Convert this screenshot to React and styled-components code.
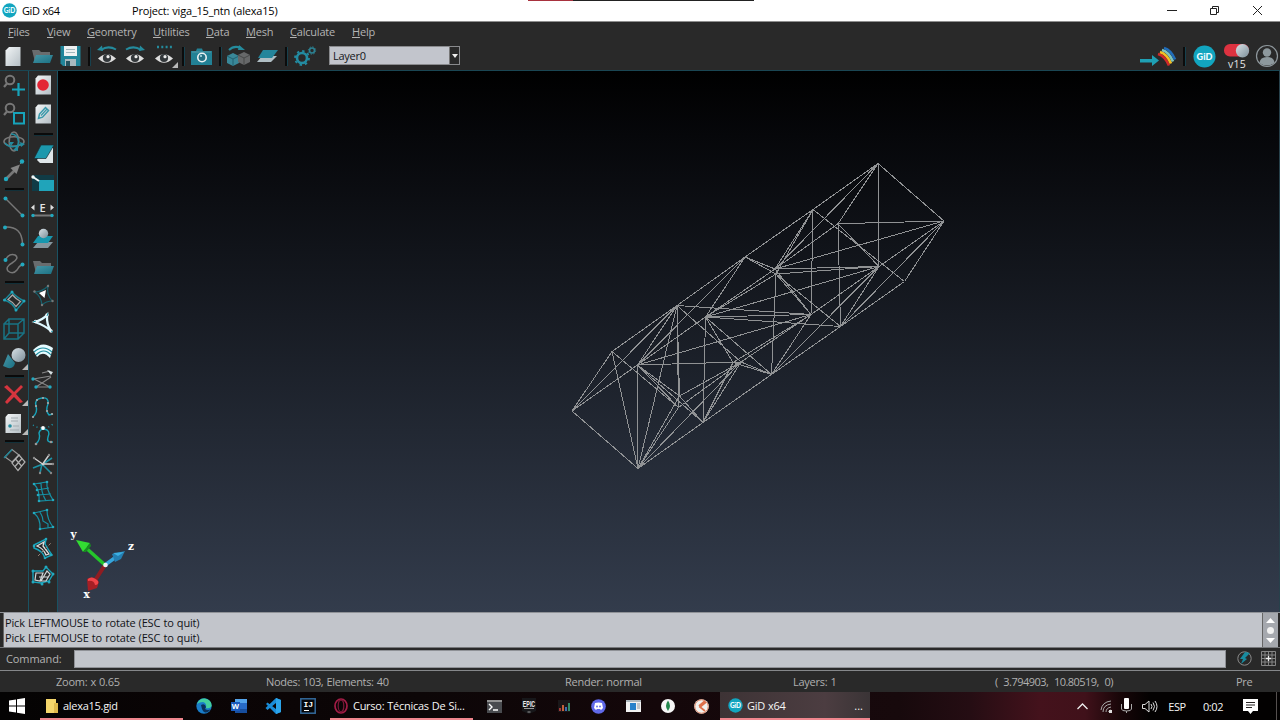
import React from "react";
import styled, { createGlobalStyle } from "styled-components";

const GlobalStyle = createGlobalStyle`
  * { box-sizing: border-box; }
  html, body { margin: 0; padding: 0; background: #292929; }
  body { font-family: "Open Sans", "Noto Sans", sans-serif; font-size: 11px; word-spacing: 0.5px; overflow: hidden; }
  svg { display: block; flex: none; }
`;

const TEAL = "#17a3ba";

const Window = styled.div`
  width: 1280px;
  height: 720px;
  display: flex;
  flex-direction: column;
  background: #292929;
  overflow: hidden;
`;

/* ---------- title bar ---------- */
const TitleBar = styled.header`
  height: 22px;
  flex: none;
  display: flex;
  align-items: center;
  background: #fff;
  color: #000;
  border-bottom: 1px solid #8e8e8e;
  padding-left: 2px;
`;
const AppName = styled.span`
  width: 110px;
  padding-left: 5px;
  line-height: 20px;
  letter-spacing: -0.4px;
`;
const ProjectName = styled.span`
  width: 401px;
  padding-left: 5px;
  line-height: 20px;
  letter-spacing: -0.2px;
`;
const CaptureMark = styled.span`
  align-self: flex-start;
  display: flex;
  width: 226px;
  height: 1px;
  background: #222;
  &::before { content: ""; width: 45px; height: 1px; background: #a8323e; }
`;
const WindowButtons = styled.div`
  margin-left: auto;
  padding-right: 1px;
  display: flex;
  align-items: center;
`;
const WindowButton = styled.span`
  width: 43px;
  display: flex;
  justify-content: center;
`;

/* ---------- menu ---------- */
const MenuBar = styled.nav`
  height: 20px;
  flex: none;
  display: flex;
  align-items: center;
  padding-left: 8px;
  color: #b4b4b4;
`;
const MenuItem = styled.span`
  display: block;
  width: ${(p) => p.$w}px;
  line-height: 20px;
  letter-spacing: -0.2px;
  white-space: nowrap;
  &::first-letter { text-decoration: underline; text-underline-offset: 1px; }
`;

/* ---------- toolbars ---------- */
const ToolBar = styled.div`
  height: 29px;
  flex: none;
  display: flex;
  align-items: center;
  border-bottom: 1px solid #1a4653;
`;
const ToolSlot = styled.div`
  width: ${(p) => p.$w || 28}px;
  height: ${(p) => p.$h || 28}px;
  flex: none;
  display: flex;
  align-items: center;
  justify-content: center;
`;
const BarDivider = styled.div`
  width: 9px;
  flex: none;
  display: flex;
  justify-content: center;
  &::before { content: ""; width: 2px; height: 19px; margin-left: 1px; background: #0c0c0c; border-right: 1px solid #17414e; }
`;
const LayerSelect = styled.div`
  width: 131px;
  height: 19px;
  margin-left: 10px;
  margin-bottom: 1px;
  display: flex;
  border: 1px solid #898a8d;
  background: #c2c5cc;
  color: #15171b;
  line-height: 17px;
  padding-left: 3px;
  letter-spacing: -0.25px;
`;
const SelectArrow = styled.span`
  margin-left: auto;
  width: 10px;
  height: 17px;
  border-left: 1px solid #777;
  background: #292929;
  display: flex;
  align-items: center;
  justify-content: center;
`;
const ToolRight = styled.div`
  margin-left: auto;
  display: flex;
  align-items: center;
`;
const VersionToggle = styled.div`
  width: 32px;
  height: 28px;
  display: flex;
  flex-direction: column;
  align-items: center;
  padding-top: 2px;
`;
const VersionText = styled.span`
  color: #e6e6e6;
  font-size: 10.5px;
  line-height: 12px;
  letter-spacing: 0.2px;
`;

const Workspace = styled.main`
  height: 541px;
  flex: none;
  display: flex;
`;
const SideBar = styled.aside`
  width: 29px;
  flex: none;
  display: flex;
  flex-direction: column;
  border-right: 1px solid #1a5262;
`;
const SideDivider = styled.div`
  height: ${(p) => p.$h || 8}px;
  flex: none;
  display: flex;
  align-items: center;
  justify-content: center;
  &::before { content: ""; width: 19px; height: 2px; background: #0a0a0a; border-bottom: 1px solid #123039; }
`;
const Viewport = styled.section`
  flex: 1;
  border-right: 1px solid #27414b;
  background: linear-gradient(#000 0%, #06070a 12%, #333c4c 100%);
`;

/* ---------- console ---------- */
const MessagePanel = styled.div`
  height: 36px;
  flex: none;
  display: flex;
  padding-left: 3px;
  padding-right: 2px;
  border-top: 1px solid #8f9297;
  border-bottom: 1px solid #77797c;
`;
const MessageText = styled.div`
  flex: 1;
  background: #c2c5cb;
  border-left: 1px solid #666;
  border-right: 1px solid #666;
  color: #111318;
  padding: 2px 0 0 1px;
  line-height: 15px;
  letter-spacing: -0.17px;
  white-space: pre;
`;
const ScrollBar = styled.div`
  width: 15px;
  background: #a5a8ae;
  display: flex;
  align-items: center;
  justify-content: center;
`;
const CommandRow = styled.div`
  height: 22px;
  flex: none;
  display: flex;
  align-items: center;
  padding: 0 0 1px 6px;
  color: #b4b4b4;
`;
const CommandLabel = styled.span`
  width: 68px;
  letter-spacing: -0.1px;
`;
const CommandInput = styled.div`
  width: 1152px;
  height: 18px;
  background: #c2c5cb;
  border: 1px solid #8f9196;
`;
const CommandIcons = styled.div`
  display: flex;
  align-items: center;
  gap: 9px;
  padding-left: 11px;
`;
const StatusBar = styled.footer`
  height: 22px;
  flex: none;
  border-top: 1px solid #85878a;
  padding: 0 0 1px 56px;
  display: flex;
  align-items: center;
  color: #b0b0b0;
`;
const StatusItem = styled.span`
  width: ${(p) => p.$w}px;
  white-space: pre;
  letter-spacing: ${(p) => p.$track || -0.25}px;
`;

/* ---------- taskbar ---------- */
const TaskBar = styled.div`
  height: 28px;
  flex: none;
  display: flex;
  color: #f5f5f5;
  background: linear-gradient(90deg, #040303 0, #0a0405 180px, #0c0607 420px, #14070a 660px, #17090c 900px, #250d13 970px, #44121c 1040px, #40111a 1085px, #180608 1120px, #030101 1150px, #030101 100%);
`;
const TaskItem = styled.div`
  width: ${(p) => p.$w}px;
  flex: none;
  display: flex;
  align-items: center;
  margin-left: ${(p) => p.$before || 0}px;
  padding: 1px 7px 0 ${(p) => p.$pad || 5}px;
  gap: ${(p) => p.$gap || 5}px;
  border-bottom: 2px solid #f0868e;
  background: ${(p) => (p.$active ? "linear-gradient(90deg, #3d3335, #4c3d41 70%, #3a3436)" : "transparent")};
  letter-spacing: -0.28px;
  white-space: nowrap;
`;
const TaskMore = styled.span`
  margin-left: auto;
  letter-spacing: 0;
`;
const TaskIcon = styled.div`
  width: ${(p) => p.$w || 34.7}px;
  padding-right: ${(p) => p.$right || 0}px;
  flex: none;
  display: flex;
  align-items: center;
  justify-content: center;
`;
const Tray = styled.div`
  margin-left: auto;
  display: flex;
  align-items: center;
`;
const TrayCell = styled.span`
  width: ${(p) => p.$w}px;
  padding-right: ${(p) => p.$right || 0}px;
  display: flex;
  justify-content: center;
  letter-spacing: -0.4px;
`;
const DesktopEdge = styled.span`
  width: 4px;
  height: 28px;
  border-left: 1px solid #55504f;
`;

/* Icon drawn on a 28-unit grid. */
const Icon = ({ size = 28, children }) => (
  <svg width={size} height={size} viewBox="0 0 28 28" fill="none">
    {children}
  </svg>
);

const Dots = ({ at, fill = "#22a9bf", r = 1.7 }) =>
  at.map(([x, y], i) => <circle key={i} cx={x} cy={y} r={r} fill={fill} />);

const GidBadge = ({ d, font }) => (
  <svg width={d} height={d} viewBox="0 0 24 24">
    <circle cx="12" cy="12" r="11.5" fill="#12a5bf" />
    <text x="12" y="15.8" textAnchor="middle" fontFamily="Lato, sans-serif" fontWeight="900" fontSize={font || 10.5} fill="#eefcff">GiD</text>
  </svg>
);

const Eye = ({ children }) => (
  <Icon>
    <path d="M5 16.500Q14 8 23 16.500Q14 25 5 16.500Z" fill="#dedede" />
    <circle cx="14" cy="16" r="4.100" fill="#33383b" />
    <circle cx="15" cy="14.700" r="1.600" fill="#ececec" />
    {children}
  </Icon>
);

const Corner = () => <path d="M28 20V26H22Z" fill="#b9b9b9" />;

const FolderShape = () => (
  <>
    <path d="M4 8H11L13 10H22V20H7Z" fill="#696c6e" />
    <path d="M8 13H25L22 21H5Z" fill="url(#tealFade)" />
  </>
);

const Gradients = styled.svg`
  position: absolute;
  width: 0;
  height: 0;
`;

const Defs = () => (
  <defs>
    <linearGradient id="tealFade" x1="0" y1="0" x2="1" y2="1">
      <stop offset="0" stopColor="#4896a7" />
      <stop offset="1" stopColor="#1a7183" />
    </linearGradient>
    <linearGradient id="paper" x1="0" y1="0" x2="1" y2="1">
      <stop offset="0" stopColor="#f2f5f6" />
      <stop offset="1" stopColor="#b5bfc5" />
    </linearGradient>
    <linearGradient id="ball" x1="0" y1="0" x2="1" y2="1">
      <stop offset="0" stopColor="#d9e2e7" />
      <stop offset="1" stopColor="#7b8e99" />
    </linearGradient>
  </defs>
);

const Page = ({ children }) => (
  <Icon>
    <path d="M9 4.500H22V23.500H6.500V7.500Z" fill="url(#paper)" />
    {children}
  </Icon>
);

const leftTools = [
  [
    <Icon><circle cx="10" cy="9" r="4.300" stroke="#777" strokeWidth="2" /><path d="M7 12.500L4 16" stroke="#777" strokeWidth="2.200" /><path d="M18.500 12V25M12 18.500H25" stroke={TEAL} strokeWidth="2.200" /></Icon>,
    <Icon><circle cx="10" cy="8" r="4.300" stroke="#777" strokeWidth="2" /><path d="M7 11.500L4 15" stroke="#777" strokeWidth="2.200" /><rect x="14" y="13" width="10" height="10.500" stroke={TEAL} strokeWidth="2" /></Icon>,
    <Icon>
      <ellipse cx="14" cy="13.500" rx="4.800" ry="9.500" stroke="#777" strokeWidth="1.600" />
      <ellipse cx="14" cy="13.500" rx="10" ry="4.800" stroke="#777" strokeWidth="1.600" />
      <path d="M11 6Q18 6 18.500 14Q18 19 15 21M5 15Q9 20 16 18L22 16" stroke="#238b9e" strokeWidth="1.600" />
      <path d="M13 22L18 18L18 23ZM20 14L25 16L21 19ZM9 14H14L11 18Z" fill="#238b9e" />
    </Icon>,
    <Icon><path d="M7 21L15 13" stroke="#777" strokeWidth="2.600" /><path d="M20 7.500L16.500 17L10.500 11Z" fill="#858585" /><path d="M20 7L22 5" stroke="#777" /><Dots at={[[6, 22], [22, 4.500]]} r={2.2} /></Icon>,
  ],
  [
    <Icon><path d="M6 6L22 22" stroke="#777" strokeWidth="1.500" /><Dots at={[[5.500, 5.500], [22.500, 22.500]]} r={2} /></Icon>,
    <Icon><path d="M5 5Q22 4 22.500 22" stroke="#777" strokeWidth="1.500" /><Dots at={[[5, 5.500], [22.500, 22.500]]} r={2} /></Icon>,
    <Icon><path d="M5.500 10Q9 3 15 5Q20 8 12 13Q5 17 8 21Q13 25 17 20Q19 16 22 14.500" stroke="#777" strokeWidth="1.500" /><Dots at={[[5.500, 10], [22.500, 14.500]]} r={2} /></Icon>,
  ],
  [
    <Icon><path d="M4.500 13L12 5Q16 10 24 14L16 23.500Q13 16 4.500 13Z" stroke="#188799" strokeWidth="1.400" /><path d="M8 12.500L12.500 8Q16 12 20.500 14.500L16 19.500Q13 15 8 12.500Z" stroke="#aaa" strokeWidth="1.300" /><Dots at={[[4.500, 13], [12, 5], [24, 14], [16, 23]]} r={1.5} /></Icon>,
    <Icon><path d="M4 9H18V24H4ZM9 4H24V18H9ZM4 9L9 4M18 9L24 4M4 24L9 18M18 24L24 18" stroke="#197384" strokeWidth="1.500" /></Icon>,
    <Icon><circle cx="18.500" cy="11" r="7" fill="url(#ball)" /><path d="M8 10L15 19Q14 25 8 24L3 22Z" fill="url(#tealFade)" /><Corner /></Icon>,
  ],
  [
    <Icon><path d="M4 7L7 5Q12 10 14 12L21 5L23 7Q19 11 16 14L23 22L20 23L14 17L7 24L5 22Q8 18 12 14Z" fill="#d7353e" /><Corner /></Icon>,
    <Icon><path d="M8 5H21V24H5.500V8Z" fill="url(#paper)" /><path d="M11 9H18M11 12H18" stroke="#a2abb0" /><circle cx="10" cy="17" r="1.800" fill="#258da0" /><path d="M13 17H19M10 21H19" stroke="#a2abb0" /><Corner /></Icon>,
  ],
  [
    <Icon><path d="M5 12L12 4.500L19 10L12 17Z" stroke="#999" strokeWidth="1.200" /><path d="M4 13L12 4.500" stroke="#1b8496" strokeWidth="1.300" /><path d="M12 18L19 10L25 17L18 25.500ZM15 21.500L22 13.500M15.500 14L21.500 21" stroke="#b0b0b0" strokeWidth="1.200" /></Icon>,
  ],
];

const rightTop = [
  <Page><circle cx="14" cy="14" r="5.800" fill="#e32535" /></Page>,
  <Page><path d="M9.500 18.500L10.500 14L16.500 7.500L19.500 10.500L13.500 17.200Z" stroke="#3998aa" strokeWidth="1.500" /><path d="M12 15.500L18 9" stroke="#3998aa" strokeWidth="1.200" /></Page>,
];

const rightTools = [
  <Icon><path d="M15 8H24V23H11L8 20Z" fill="#dfe6e9" /><path d="M12 5H25L17 18.500H5Z" fill="#1c98ad" stroke="#172e34" strokeWidth=".7" /></Icon>,
  <Icon><path d="M3 7H25V23H3Z" fill="#103b46" /><path d="M10 12H25V23H10Z" fill="#20a4ba" /><path d="M4 9L10 13" stroke="#f0f6f7" strokeWidth="2" /><Dots at={[[4, 9]]} fill="#f0f6f7" /></Icon>,
  <Icon><text x="13.500" y="15.500" textAnchor="middle" fontFamily="Open Sans" fontWeight="600" fontSize="11" fill="#e4e4e4">E</text><path d="M5.500 8.500L2 11.500L5.500 14.500ZM21.500 8.500L25 11.500L21.500 14.500Z" fill="#dedede" /><path d="M4 19.500H23" stroke="#787878" strokeWidth="2" /><Dots at={[[4, 19.500], [23, 19.500]]} /></Icon>,
  <Icon><path d="M9 18H24L19 24H4Z" fill="#85969e" /><path d="M9 12H24L19 19H4Z" fill="#1797ae" /><circle cx="14.500" cy="9.500" r="4.700" fill="url(#ball)" /></Icon>,
  <Icon><FolderShape /></Icon>,
  <Icon><path d="M5.500 11Q13 11 19 5Q17 14 23.500 20Q17 20 13 24Q12 15 5.500 11Z" stroke="#17616d" strokeWidth="1.200" /><path d="M10 12L17 9L15.500 17Z" fill="#fff" /><Dots at={[[5.500, 10.500], [19, 5], [23.500, 20], [13, 24]]} fill="#777" r={1.2} /></Icon>,
  <Icon><path d="M6 13Q14 10.500 18 6Q17.500 16 22 22Q17 17 6 13Z" stroke="#dff9ff" strokeWidth="2.300" /><Dots at={[[6.500, 12.500], [18, 6], [22, 22]]} fill="#f3fbff" /><path d="M4 13L7 12M19 4L18 7M22 22L24 23" stroke="#1c97a9" /></Icon>,
  <Icon><path d="M4 13Q13 3 24 11L21 21Q14 13 8 20Z" fill="#e6fbff" /><path d="M5 15Q14 7 23 15M7 18Q15 10 22 18" stroke="#1c8b9d" strokeWidth="1.100" /></Icon>,
  <Icon><path d="M4 14L22 11M7 22L22 12M8 22L22 22M5 14L21 22M13 8L21 6" stroke="#888" strokeWidth="1.100" /><path d="M18 5L22 10L24 7Z" fill="#d7e0e2" /><Dots at={[[4, 14], [7, 22], [21, 22]]} /></Icon>,
  <Icon><path d="M4 24Q9 19 7 13Q5 6 13 5Q20 4 19 11Q16 18 20 22L24 21" stroke={TEAL} strokeWidth="1.400" /><Dots at={[[4, 24], [7, 13], [8, 7], [14, 5], [19, 10], [18, 18], [23, 21]]} fill="#aaa" r={1.1} /></Icon>,
  <Icon><path d="M7 23Q12 18 10 12Q11 8 15 8Q22 9 19 16Q17 22 24 21" stroke={TEAL} strokeWidth="1.400" /><path d="M4 4Q8 7 14 7Q20 7 24 3" stroke="#1c98ad" strokeDasharray="1 3" strokeWidth="1.500" /><Dots at={[[14, 7]]} fill="#fff" r={1.9} /><Dots at={[[7, 23], [22, 21]]} fill="#999" r={1.3} /></Icon>,
  <Icon><path d="M14 14L23 8M4 18L14 14M13 14L11 23M14 15L22 23" stroke="#1d91a4" strokeWidth="1.600" /><path d="M20 5L13 15M5 8L15 15M15 14L24 14" stroke="#d0d0d0" strokeWidth="1.400" /><Dots at={[[5, 8], [11, 23], [20, 5], [24, 14], [22, 23]]} fill="#888" r={1.2} /></Icon>,
  <Icon><path d="M5 6L18 4Q17 11 24 22L10 23Q11 12 5 6ZM8 12L20 10M9 17L22 16M12 5Q12 14 17 23" stroke="#168fa3" strokeWidth="1.200" /><Dots at={[[5, 6], [18, 4], [24, 22], [10, 23], [8, 12], [9, 17]]} r={1.3} /></Icon>,
  <Icon><path d="M5 7L18 4Q18 13 24 21L11 23Q12 13 5 7ZM11 6Q14 11 14 15L19 18L19 22" stroke="#168fa3" strokeWidth="1.200" /><Dots at={[[5, 7], [18, 4], [24, 21], [11, 23]]} r={1.3} /></Icon>,
  <Icon><path d="M5 11L17 5L16 10Q20 17 23 21L16 24Q14 17 5 14Z" stroke={TEAL} strokeWidth="1.500" /><path d="M8 12L15 8L14 12Q18 17 20 20L17 21Q15 15 8 12Z" stroke="#ddd" strokeWidth="1.300" /><path d="M9 22L22 9" stroke="#907f74" strokeDasharray="3 2" /><Dots at={[[5, 12], [17, 5], [22, 21], [16, 24]]} r={1.3} /></Icon>,
  <Icon><path d="M4 9L14 9L17 5L24 12L20 19L12 21L4 20Z" stroke={TEAL} strokeWidth="1.400" /><path d="M7 11H14L11 19L6 18ZM12 19L18 9L21 12L17 19ZM10 15L19 15" stroke="#d0d6d8" strokeWidth="1.200" /><Dots at={[[4, 9], [17, 5], [24, 12], [20, 20], [4, 20], [13, 22]]} r={1.5} /></Icon>,
];

/* ---------- truss model ---------- */
const nodes = {
  A: [878, 163.500], B: [944, 221], C: [904.500, 281.500], D: [838, 223.700], E: [813, 209.500],
  F: [879, 266.500], G: [840.500, 326.500], H: [775, 269], h: [776, 274], I: [745, 257],
  J: [811, 314.500], K: [771.500, 374.500], L: [705.500, 317], M: [677, 305.500], N: [741, 362],
  n: [733, 362.500], O: [703, 422.500], P: [637.500, 365], Q: [612, 351.500], R: [572, 411],
  S: [638, 468.500], T: [679.500, 396], t: [678.500, 407.500],
};
const bars = (
  "AB AE EI IM MQ QR RS SO OK KG GC CB AF AD AH BD BF BH BG EC DF DG DH EJ EH Eh FH Fh FL FJ FG FK " +
  "hG HJ hJ IH Ih hK HL hL IL LJ MJ LG JP JK JN Jn LO LK Ln MN NK nK NO nO NP NT Nt NS LP IP MP MR " +
  "PR PS QS MS MT Mt PT Pt Qt TO PO ST St"
).split(" ");

const Model = () => (
  <svg width="1221" height="541" viewBox="58 71 1221 541">
    <g stroke="#909294" strokeWidth="1" shapeRendering="crispEdges">
      {bars.map((b) => {
        const [x1, y1] = nodes[b[0]];
        const [x2, y2] = nodes[b[1]];
        return <line key={b} x1={x1} y1={y1} x2={x2} y2={y2} />;
      })}
    </g>
    <path d="M105 565L94 582" stroke="#8f1d22" strokeWidth="4" />
    <path d="M87 579Q94 575 99 582L97 588L88 591Z" fill="#a51f25" />
    <path d="M88 579Q92 575 98 581Q99 585 95 585Q94 580 88 581Z" fill="#f04449" />
    <path d="M105 565L85 547" stroke="#25c52b" strokeWidth="3.500" />
    <path d="M76 540L90 543L83 552Z" fill="#33dc33" />
    <path d="M83 552L90 543L91 546L86 552Z" fill="#178d20" />
    <path d="M105 565L116 557" stroke="#36a5dc" strokeWidth="3.500" />
    <path d="M112 554L125 551L121 559L115 562Z" fill="#247fb2" />
    <path d="M113 553L124 552L118 556Z" fill="#3cafe2" />
    <circle cx="105.500" cy="565" r="2.300" fill="#f4f4f4" />
    <g fill="#fff" fontFamily="DejaVu Serif" fontWeight="700" fontSize="10.500">
      <text x="70.500" y="537.500">y</text>
      <text x="128" y="549.500">z</text>
      <text x="83.500" y="597.500">x</text>
    </g>
  </svg>
);

export default function App() {
  return (
    <Window>
      <GlobalStyle />
      <Gradients><Defs /></Gradients>
      <TitleBar>
        <GidBadge d={15} />
        <AppName>GiD x64</AppName>
        <ProjectName>Project: viga_15_ntn (alexa15)</ProjectName>
        <CaptureMark />
        <WindowButtons>
          <WindowButton><svg width="11" height="11"><path d="M1 5.500H11" stroke="#222" /></svg></WindowButton>
          <WindowButton><svg width="11" height="11" fill="none"><path d="M1.500 3.500H7.500V9.500H1.500ZM3.500 3.500V1.500H9.500V7.500H7.500" stroke="#222" /></svg></WindowButton>
          <WindowButton><svg width="11" height="11"><path d="M1 1L10 10M10 1L1 10" stroke="#222" /></svg></WindowButton>
        </WindowButtons>
      </TitleBar>

      <MenuBar>
        <MenuItem $w={39}>Files</MenuItem>
        <MenuItem $w={40}>View</MenuItem>
        <MenuItem $w={66}>Geometry</MenuItem>
        <MenuItem $w={53}>Utilities</MenuItem>
        <MenuItem $w={40}>Data</MenuItem>
        <MenuItem $w={44}>Mesh</MenuItem>
        <MenuItem $w={62}>Calculate</MenuItem>
        <MenuItem $w={30}>Help</MenuItem>
      </MenuBar>

      <ToolBar>
        <ToolSlot $w={27}><Icon><path d="M9 5H20.500V24H5.500V8.500Z" fill="url(#paper)" /></Icon></ToolSlot>
        <ToolSlot $w={29}><Icon><FolderShape /></Icon></ToolSlot>
        <ToolSlot>
          <Icon><path d="M4.500 4H24.500V24H7L4.500 21.500Z" fill="#21859a" /><path d="M8 4H21V14H8Z" fill="#eef1f2" /><path d="M10 7.500H19M10 10.500H19" stroke="#a2b7bd" /><path d="M9 17H20V24H9Z" fill="#a8b9bf" /><path d="M10 19H14V24H10Z" fill="#24535f" /></Icon>
        </ToolSlot>
        <BarDivider />
        <ToolSlot><Eye><path d="M8 8Q15 3 23 7.500" stroke="#248b9d" strokeWidth="2" /><path d="M4 8L9 3.500L10 9Z" fill="#248b9d" /></Eye></ToolSlot>
        <ToolSlot><Eye><path d="M5 7.500Q13 3 20 8" stroke="#248b9d" strokeWidth="2" /><path d="M24 8L19 3.500L18 9Z" fill="#248b9d" /></Eye></ToolSlot>
        <ToolSlot $w={29}><Eye><path d="M7 5H22" stroke="#248b9d" strokeWidth="2.500" strokeDasharray="2 2.300" /><Corner /></Eye></ToolSlot>
        <BarDivider />
        <ToolSlot><Icon><path d="M4 9H9L10 6.500H15L16 9H25V23H4Z" fill="#228195" /><path d="M5 10H24" stroke="#5497a5" /><circle cx="15" cy="15.500" r="5" fill="#edf2f3" /><circle cx="15" cy="15.500" r="3.400" fill="#267184" /><circle cx="14" cy="14" r="1" fill="#b7e4eb" /></Icon></ToolSlot>
        <BarDivider />
        <ToolSlot><Icon><path d="M3 14L9 11L15 14V21L9 24L3 21Z" fill="#398899" /><path d="M3 14L9 17L15 14M9 17V24" stroke="#236170" /><path d="M14 13L20 10L26 13V20L20 23L14 20Z" fill="#666869" /><path d="M14 13L20 16L26 13M20 16V23" stroke="#474949" /><path d="M5 8Q10 3 17 6" stroke="#248b9d" strokeWidth="2" /><path d="M15 3L21 8H14Z" fill="#248b9d" /></Icon></ToolSlot>
        <ToolSlot $w={29}><Icon><path d="M9 14H24L18 20H4Z" fill="#afbec4" /><path d="M10 8H25L19 16H5Z" fill="#24859b" /></Icon></ToolSlot>
        <BarDivider />
        <ToolSlot $w={29}><Icon><circle cx="11" cy="16" r="5" stroke="#238ba1" strokeWidth="2.600" /><circle cx="11" cy="16" r="7" stroke="#238ba1" strokeWidth="1.800" strokeDasharray="2.400 3.098" /><circle cx="21" cy="8.500" r="2.500" stroke="#2c8192" strokeWidth="1.600" /><circle cx="21" cy="8.500" r="3.700" stroke="#2c8192" strokeDasharray="1.300 1.600" /></Icon></ToolSlot>
        <LayerSelect>Layer0<SelectArrow><svg width="6" height="4"><path d="M0 0H6L3 4Z" fill="#eee" /></svg></SelectArrow></LayerSelect>
        <ToolRight>
          <svg width="40" height="28" viewBox="0 0 40 28">
            <path d="M1 17H13V13L20 18.500L13 24V20.500H1Z" fill="#1fa0b4" />
            <g fill="none" strokeWidth="2.700"><path d="M19 12Q26 14 30 23.500" stroke="#cf2929" /><path d="M21 10Q28 12 32 21.500" stroke="#f3bf24" /><path d="M23 8Q30 10 34 19.500" stroke="#80c5bb" /><path d="M25 6Q32 8 36 17.500" stroke="#206dba" /></g>
          </svg>
          <BarDivider />
          <ToolSlot $w={33}><GidBadge d={23} font={9.5} /></ToolSlot>
          <VersionToggle>
            <svg width="26" height="14" viewBox="0 0 26 14"><rect width="25" height="12.500" rx="6" fill="#dd3240" /><circle cx="18.500" cy="6.800" r="6.700" fill="url(#ball)" /></svg>
            <VersionText>v15</VersionText>
          </VersionToggle>
          <ToolSlot $w={27}><svg width="24" height="24" viewBox="0 0 24 24"><circle cx="12" cy="12" r="10.500" fill="none" stroke="#8e979c" strokeWidth="1.200" /><circle cx="12" cy="8.500" r="4.200" fill="#8d989d" /><path d="M4.500 19Q5 13 12 13Q19 13 19.500 19Q12 24 4.500 19Z" fill="#8d989d" /></svg></ToolSlot>
        </ToolRight>
      </ToolBar>

      <Workspace>
        <SideBar>
          {leftTools.map((group, g) => (
            <React.Fragment key={g}>
              {g > 0 && <SideDivider />}
              {group.map((icon, i) => <ToolSlot key={i} $h={28.5}>{icon}</ToolSlot>)}
            </React.Fragment>
          ))}
        </SideBar>
        <SideBar>
          {rightTop.map((icon, i) => <ToolSlot key={i} $h={28.5}>{icon}</ToolSlot>)}
          <SideDivider $h={12} />
          {rightTools.map((icon, i) => <ToolSlot key={i} $h={28.15}>{icon}</ToolSlot>)}
        </SideBar>
        <Viewport><Model /></Viewport>
      </Workspace>

      <MessagePanel>
        <MessageText>{"Pick LEFTMOUSE to rotate (ESC to quit)\nPick LEFTMOUSE to rotate (ESC to quit)."}</MessageText>
        <ScrollBar><svg width="9" height="28"><path d="M4.500 2L9 7H0ZM4.500 27L9 22H0Z" fill="#fff" /><circle cx="4.500" cy="14.500" r="3.500" fill="#f1f1f1" /></svg></ScrollBar>
      </MessagePanel>
      <CommandRow>
        <CommandLabel>Command:</CommandLabel>
        <CommandInput />
        <CommandIcons>
          <svg width="15" height="15" viewBox="0 0 15 15"><circle cx="7.500" cy="7.500" r="6.700" fill="none" stroke="#8b8b8b" /><path d="M8 1L13 2L8 7L10 8L4 13L6 8L3 8Z" fill="#188ca1" /></svg>
          <svg width="15" height="15" viewBox="0 0 15 15"><path d="M.5.500H14.500V14.500H.5ZM4 0V15M7.500 0V15M11 0V15M0 4H15M0 7.500H15M0 11H15" fill="none" stroke="#868686" /><path d="M5 7.500H10M7.500 5V10" stroke="#eee" strokeWidth="1.300" /></svg>
        </CommandIcons>
      </CommandRow>
      <StatusBar>
        <StatusItem $w={210}>Zoom: x 0.65</StatusItem>
        <StatusItem $w={299} $track={-0.33}>Nodes: 103, Elements: 40</StatusItem>
        <StatusItem $w={228}>Render: normal</StatusItem>
        <StatusItem $w={202}>Layers: 1</StatusItem>
        <StatusItem $w={241} $track={-0.54}>{"(  3.794903,  10.80519,  0)"}</StatusItem>
        <StatusItem $w={30}>Pre</StatusItem>
      </StatusBar>

      <TaskBar>
        <TaskIcon $w={40} $right={7}><svg width="16" height="16"><path d="M0 2.500L7 1.500V7.500H0ZM8 1.300L16 0V7.500H8ZM0 8.500H7V14.500L0 13.500ZM8 8.500H16V16L8 14.700Z" fill="#fff" /></svg></TaskIcon>
        <TaskItem $w={143}><svg width="13" height="16"><path d="M1 1H11V5H13V15H1Z" fill="#f5d66b" /><path d="M9 5H13V15H9Z" fill="#dfb94c" /></svg>alexa15.gid</TaskItem>
        <TaskIcon $w={42}><svg width="16" height="16" viewBox="0 0 16 16"><circle cx="8" cy="8" r="7.700" fill="#197cc8" /><path d="M1 6Q3 0 9 .4Q16 2 15.700 8Q14 11 10 10Q11 5 7 4Q3 4 1 6Z" fill="#42cf9e" /><path d="M5 7Q9 5 10 9L9 11Q12 13 15 11Q9 18 6 11Z" fill="#0a315a" /></svg></TaskIcon>
        <TaskIcon $w={28}><svg width="16" height="16" viewBox="0 0 16 16"><path d="M4 1H16V15H4Z" fill="#286bc7" /><path d="M4 1H16V5H4Z" fill="#54a4eb" /><path d="M4 11H16V15H4Z" fill="#174e9e" /><rect y="4" width="9" height="9" fill="#195abd" /><text x="4.500" y="11" textAnchor="middle" fontSize="7.500" fontWeight="700" fill="#fff">W</text></svg></TaskIcon>
        <TaskIcon $w={40}><svg width="16" height="16" viewBox="0 0 16 16"><path d="M11 0L16 2V14L11 16L1 6L2.500 4.500L11 11V5L2.500 12L.5 10Z" fill="#198cd8" /><path d="M11 0L16 2V14L11 16Z" fill="#2ba4ea" /></svg></TaskIcon>
        <TaskIcon $w={29}><svg width="16" height="16" viewBox="0 0 16 16"><rect x=".8" y=".8" width="14.400" height="14.400" fill="#06070a" stroke="#34699b" strokeWidth="1.500" /><text x="3.500" y="9" fontFamily="Liberation Mono" fontWeight="700" fontSize="8" fill="#fff">IJ</text><path d="M4 12.500H9" stroke="#fff" /></svg></TaskIcon>
        <TaskItem $w={143} $before={8} $pad={4}><svg width="14" height="16" viewBox="0 0 14 16"><ellipse cx="7" cy="8" rx="6" ry="7" fill="none" stroke="#a41c46" strokeWidth="1.700" /><ellipse cx="7" cy="8" rx="2.800" ry="5.800" fill="none" stroke="#7c1838" strokeWidth="1.200" /></svg>Curso: Técnicas De Si...</TaskItem>
        <TaskIcon $w={42}><svg width="15" height="13"><path d="M0 0H15V13H0Z" fill="#494b4f" /><path d="M0 0H15V2H0Z" fill="#929292" /><path d="M2 4L5 7L2 10M6 10H11" stroke="#fff" strokeWidth="1.400" fill="none" /></svg></TaskIcon>
        <TaskIcon $w={28}><svg width="18" height="18"><path d="M2 1H16V14L9 17L2 14Z" fill="#17171a" /><g transform="translate(9 9.500) scale(.62 1)"><text textAnchor="middle" fontFamily="Liberation Sans" fontSize="8.500" fontWeight="700" fill="#eee">EPIC</text></g><path d="M4 11.500H14M7.500 15H10.500" stroke="#999" /></svg></TaskIcon>
        <TaskIcon $w={41}><svg width="12" height="12"><rect width="12" height="12" fill="#1a1719" /><path d="M1 11V8H3V11Z" fill="#a33b3a" /><path d="M4 11V5H6V11Z" fill="#c4603b" /><path d="M7 11V7H9V11Z" fill="#3e6db1" /><path d="M10 11V3H12V11Z" fill="#328b67" /></svg></TaskIcon>
        <TaskIcon $w={29}><svg width="15" height="15" viewBox="0 0 15 15"><circle cx="7.500" cy="7.500" r="7.300" fill="#6069e9" /><path d="M4 4Q7.500 3 11 4L12 9L10 11L9 10H6L5 11L3 9Z" fill="#fff" /><circle cx="6" cy="7.500" r=".9" fill="#6069e9" /><circle cx="9" cy="7.500" r=".9" fill="#6069e9" /></svg></TaskIcon>
        <TaskIcon $w={40}><svg width="15" height="12"><rect width="15" height="12" fill="#f2f2f2" /><path d="M0 0H15V2H0Z" fill="#aeb8be" /><path d="M4 3H10V10H4Z" fill="#2781ca" /><path d="M11 4H14M11 6H14M11 8H14" stroke="#8f9aa1" /></svg></TaskIcon>
        <TaskIcon $w={29}><svg width="14" height="14"><circle cx="7" cy="7" r="7" fill="#f7f7f7" /><path d="M7 1.500Q11 7 7 12Q3 7 7 1.500Z" fill="#24884e" /></svg></TaskIcon>
        <TaskIcon $w={38}><svg width="15" height="15" viewBox="0 0 15 15"><circle cx="7.500" cy="7.500" r="7.300" fill="#f1f1ee" /><path d="M12 3L6 8L11 12M5 7L11 2" fill="none" stroke="#de704a" strokeWidth="1.800" /><circle cx="7.500" cy="7.500" r="6.700" fill="none" stroke="#e38a6b" /></svg></TaskIcon>
        <TaskItem $w={150} $active $pad={8} $gap={4}><GidBadge d={15} />GiD x64<TaskMore>...</TaskMore></TaskItem>
        <Tray>
          <TrayCell $w={26}><svg width="11" height="7"><path d="M.5 6L5.500 1L10.500 6" fill="none" stroke="#eee" strokeWidth="1.300" /></svg></TrayCell>
          <TrayCell $w={21}><svg width="12" height="13" viewBox="0 0 12 13"><path d="M1 10Q2 2 11 1M3 12Q3 5 11 4M6 12Q6 8 11 7M8.500 12Q9 10 11 10" fill="none" stroke="#aaa" /><path d="M9 10H12V13H9Z" fill="#ddd" /></svg></TrayCell>
          <TrayCell $w={21}><svg width="11" height="16"><rect x="3" y="0" width="5" height="11" rx="1" fill="#fff" /><path d="M.5 6V11Q.5 13 5.500 13Q10.500 13 10.500 11V6M5.500 13V15" fill="none" stroke="#aaa" /></svg></TrayCell>
          <TrayCell $w={26}><svg width="16" height="13" viewBox="0 0 16 13"><path d="M.5 4.500H3L7 1V12L3 8.500H.5ZM9 4Q11 6.500 9 9M11 2.500Q14 6.500 11 10.500M13 1Q17 6.500 13 12" fill="none" stroke="#ddd" /></svg></TrayCell>
          <TrayCell $w={28}>ESP</TrayCell>
          <TrayCell $w={44}>0:02</TrayCell>
          <TrayCell $w={41} $right={11}><svg width="15" height="15"><path d="M0 0H15V12H10L7.500 15L5 12H0Z" fill="#fff" /><path d="M3 3.500H12M3 6H12M3 8.500H9" stroke="#272222" /></svg></TrayCell>
          <DesktopEdge />
        </Tray>
      </TaskBar>
    </Window>
  );
}
